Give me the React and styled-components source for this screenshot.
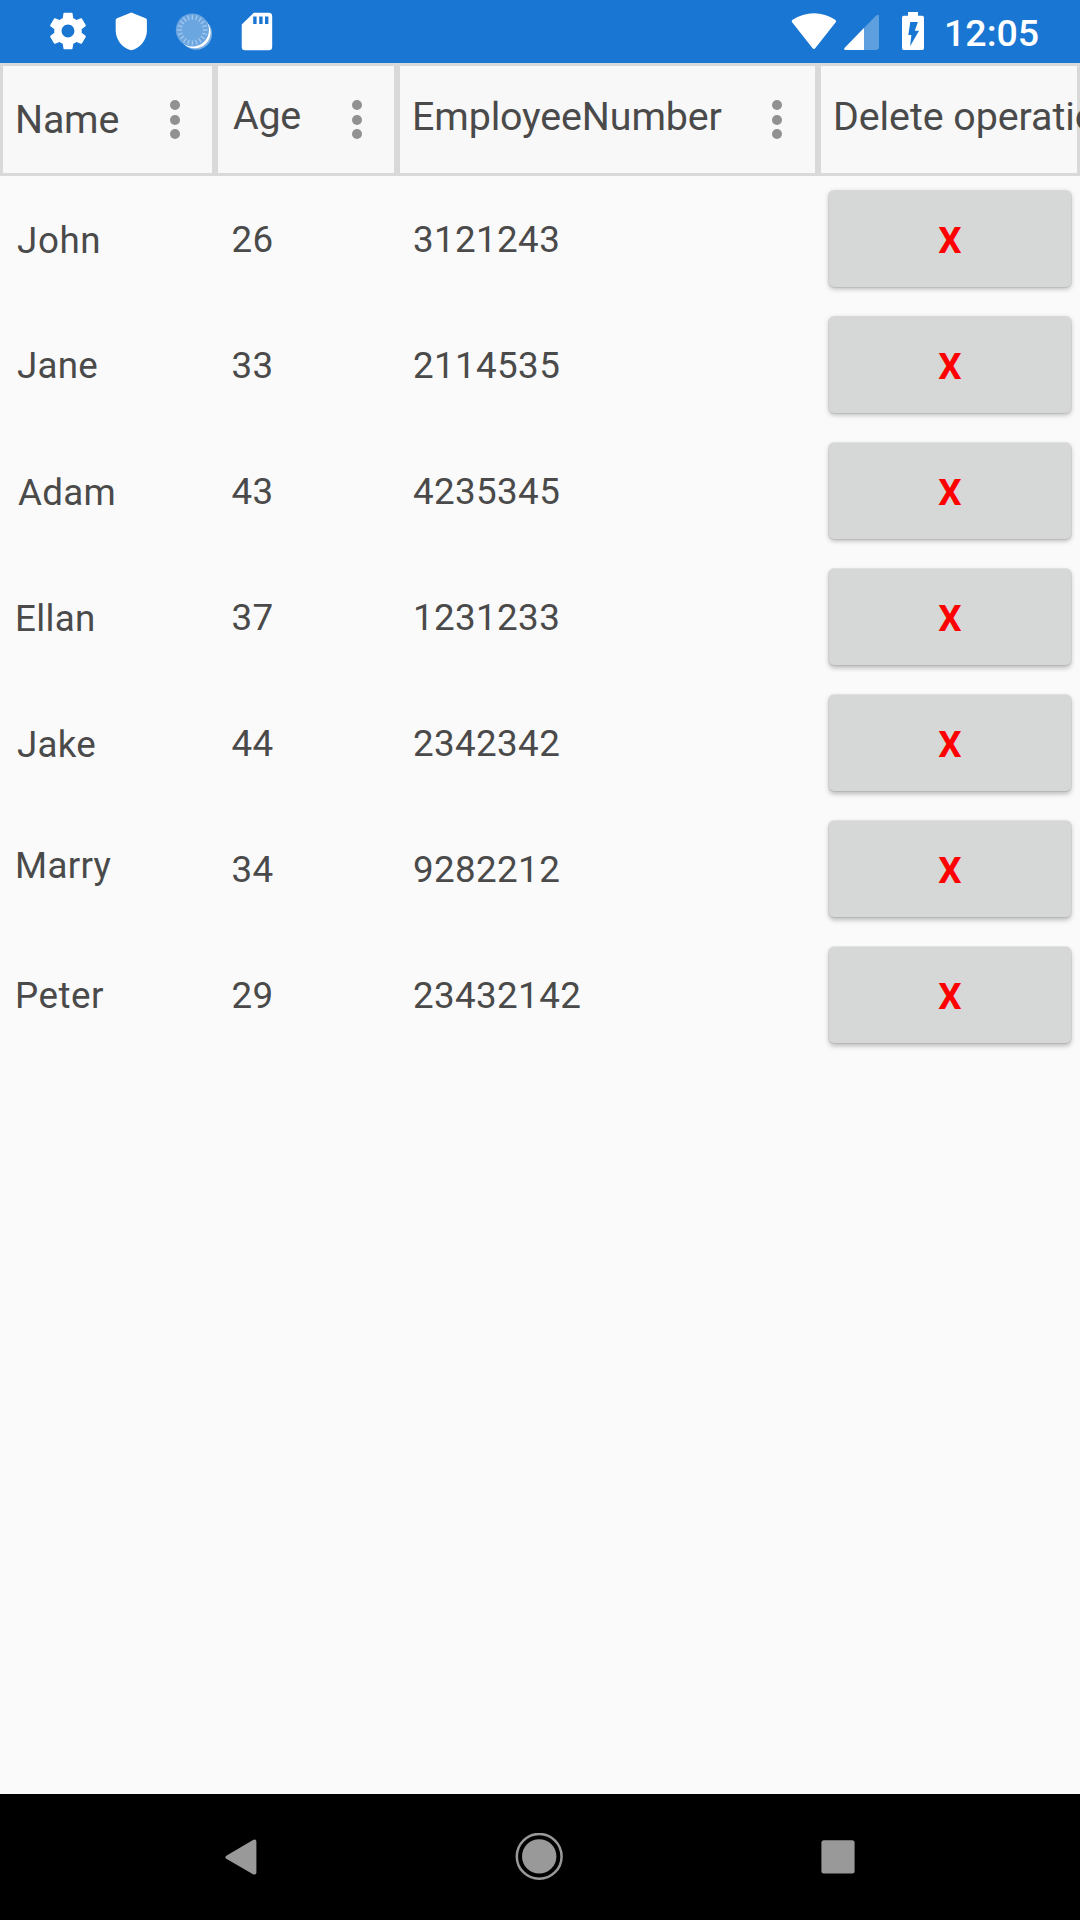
import React from "react";
import styled, { createGlobalStyle } from "styled-components";

const Global = createGlobalStyle`
  * { box-sizing: border-box; }
  html, body { margin: 0; padding: 0; }
  body { background: #fafafa; font-family: Roboto, "Noto Sans", sans-serif; color: #4a4a4a; overflow: hidden; }
`;

const Screen = styled.div`
  width: 1080px;
  height: 1920px;
  display: flex;
  flex-direction: column;
  background: #fafafa;
  overflow: hidden;
`;

const StatusBar = styled.header`
  flex: none;
  height: 63px;
  display: flex;
  justify-content: space-between;
  background: #1976d2;
  color: #fff;
`;

const StatusGroup = styled.div`
  display: flex;
  align-items: flex-start;
  padding: ${(p) => p.$pad};
`;

const Glyph = styled.svg`
  display: block;
  flex: none;
  margin-right: ${(p) => p.$gap || 0}px;
`;

const Clock = styled.time`
  width: 95px;
  font-size: 37.5px;
  font-weight: 500;
  line-height: 44px;
  padding-top: 2px;
  white-space: nowrap;
`;

const Grid = styled.main`
  flex: 1;
  min-height: 0;
  display: flex;
  flex-direction: column;
`;

const Row = styled.div`
  flex: none;
  display: grid;
  grid-template-columns: 215px 182px 421px 262px;
  height: ${(p) => (p.$head ? 113 : 126)}px;
`;

const HeaderCell = styled.div`
  display: flex;
  align-items: flex-start;
  justify-content: space-between;
  border: 3px solid #d9d9d9;
  background: #f8f8f8;
  padding-left: ${(p) => p.$left}px;
  padding-right: ${(p) => p.$right || 32}px;
  min-width: 0;
`;

const HeaderText = styled.span`
  font-size: 39.375px;
  line-height: 46px;
  padding-top: ${(p) => p.$top}px;
  white-space: nowrap;
  letter-spacing: ${(p) => p.$track || 0}px;
`;

const Menu = styled.span`
  display: flex;
  flex-direction: column;
  gap: 4.4px;
  padding-top: 34.4px;
`;

const Dot = styled.i`
  width: 10px;
  height: 10px;
  border-radius: 50%;
  background: #919191;
`;

const Cell = styled.div`
  font-size: 36.75px;
  line-height: 43px;
  padding-top: ${(p) => p.$top}px;
  padding-left: ${(p) => p.$left}px;
  letter-spacing: ${(p) => p.$track || 0}px;
`;

const ActionCell = styled.div`
  padding: 15px 9px 15px 11px;
  display: flex;
`;

const DeleteButton = styled.button`
  flex: 1;
  border: 0;
  border-radius: 5px;
  background: #d6d7d7;
  color: #ff0000;
  font: 700 36.75px/43px Roboto, "Noto Sans", sans-serif;
  padding: 2px 0 0;
  box-shadow: 0 0 0 1px rgba(0, 0, 0, 0.07), 0 ${(p) => p.$lift}px 5px rgba(0, 0, 0, 0.26);
`;

const NavBar = styled.nav`
  flex: none;
  height: 126px;
  background: #000;
  display: flex;
  align-items: center;
  padding-left: 225px;
`;

const people = [
  { name: "John", age: 26, number: "3121243", top: 43, left: 17, track: 0.6 },
  { name: "Jane", age: 33, number: "2114535", top: 42, left: 17, track: 0.25 },
  { name: "Adam", age: 43, number: "4235345", top: 43, left: 18, track: 0.3 },
  { name: "Ellan", age: 37, number: "1231233", top: 43, left: 15, track: 0.3 },
  { name: "Jake", age: 44, number: "2342342", top: 43, left: 17, track: 0.2 },
  { name: "Marry", age: 34, number: "9282212", top: 38, left: 15, track: 0.3 },
  { name: "Peter", age: 29, number: "23432142", top: 42, left: 15, track: 0.5 },
];

const GearIcon = () => (
  <Glyph width="44" height="44" viewBox="0 0 24 24" $gap={20}>
    <path fill="#fff" d="M19.43 12.98c.04-.32.07-.64.07-.98s-.03-.66-.07-.98l2.11-1.65c.19-.15.24-.42.12-.64l-2-3.46c-.12-.22-.39-.3-.61-.22l-2.49 1c-.52-.4-1.08-.73-1.69-.98l-.38-2.65C14.46 2.18 14.25 2 14 2h-4c-.25 0-.46.18-.49.42l-.38 2.65c-.61.25-1.17.59-1.69.98l-2.49-1c-.23-.09-.49 0-.61.22l-2 3.46c-.13.22-.07.49.12.64l2.11 1.65c-.04.32-.07.65-.07.98s.03.66.07.98l-2.11 1.65c-.19.15-.24.42-.12.64l2 3.46c.12.22.39.3.61.22l2.49-1c.52.4 1.08.73 1.69.98l.38 2.65c.03.24.24.42.49.42h4c.25 0 .46-.18.49-.42l.38-2.65c.61-.25 1.17-.59 1.69-.98l2.49 1c.23.09.49 0 .61-.22l2-3.46c.12-.22.07-.49-.12-.64l-2.11-1.65zM12 15.5c-1.93 0-3.5-1.57-3.5-3.5s1.57-3.5 3.5-3.5 3.5 1.57 3.5 3.5-1.57 3.5-3.5 3.5z" />
  </Glyph>
);

const ShieldIcon = () => (
  <Glyph width="42" height="44" viewBox="0 0 42 44" $gap={20}>
    <path fill="#fff" d="M21.3 3.6 7 9.2Q5.7 9.8 5.7 11V21.5C5.7 30.5 12 39 21.3 41.3 30.6 39 36.9 30.5 36.9 21.5V11Q36.9 9.8 35.6 9.2Z" />
  </Glyph>
);

const SpinnerIcon = () => (
  <Glyph width="44" height="44" viewBox="0 0 44 44" $gap={20}>
    <circle cx="24" cy="24.8" r="16" fill="#fff" opacity="0.45" />
    <circle cx="22.6" cy="23.2" r="16" fill="#fff" />
    <circle cx="20.4" cy="21" r="16.6" fill="#6ba6e1" />
    {Array.from({ length: 20 }, (_, i) => (
      <line key={i} x1="20.4" y1="5.8" x2="20.4" y2="10.6" stroke="#a3c8ed" strokeWidth="1.3" transform={`rotate(${i * 18} 20.4 21)`} />
    ))}
  </Glyph>
);

const SdCardIcon = () => (
  <Glyph width="42" height="44" viewBox="0 0 42 44">
    <path fill="#fff" fillRule="evenodd" d="M17.8 3.7H32.7Q36.2 3.7 36.2 7.2V37.8Q36.2 41.3 32.7 41.3H9Q5.7 41.3 5.7 37.8V15.6ZM17.2 7.5V15h3.4V7.5ZM23.2 7.5V15h3.4V7.5ZM29 7.5V15h3.4V7.5Z" />
  </Glyph>
);

const WifiIcon = () => (
  <Glyph width="46" height="44" viewBox="0 -1.2 46 44" $gap={7}>
    <path fill="#fff" d="M1.3 12.2C.4 11.2.6 10.4 1.6 9.5 14.3.8 31.7.8 44.2 9.5 45.2 10.4 45.4 11.2 44.5 12.2L24.4 37.9Q22.9 39.7 21.4 37.9Z" />
  </Glyph>
);

const SignalIcon = () => (
  <Glyph width="36" height="44" viewBox="0 0 36 44" $gap={22}>
    <path fill="#fff" opacity="0.3" d="M.8 38.8 31.6 7Q35 4.4 35 7.6V38.6Q35 41 32.6 41H2Q-.8 40.8.8 38.8Z" />
    <path fill="#fff" d="M20 19V41H2Q-.8 40.8.8 38.8Z" />
  </Glyph>
);

const BatteryIcon = () => (
  <Glyph width="22" height="44" viewBox="0 0 22 44" $gap={20}>
    <path fill="#fff" fillRule="evenodd" d="M6 3H16V6.8H20.2Q22 6.8 22 8.8V39Q22 41 20.2 41H1.8Q0 41 0 39V8.8Q0 6.8 1.8 6.8H6ZM8.3 13 6.3 26H9.4L8.1 37.2 17 21.8H12.8L15.9 13Z" />
  </Glyph>
);

const ColumnMenu = () => (
  <Menu>
    <Dot />
    <Dot />
    <Dot />
  </Menu>
);

export default function App() {
  return (
    <Screen>
      <Global />
      <StatusBar>
        <StatusGroup $pad="9px 0 0 46px">
          <GearIcon />
          <ShieldIcon />
          <SpinnerIcon />
          <SdCardIcon />
        </StatusGroup>
        <StatusGroup $pad="9px 41px 0 0">
          <WifiIcon />
          <SignalIcon />
          <BatteryIcon />
          <Clock>12:05</Clock>
        </StatusGroup>
      </StatusBar>
      <Grid>
        <Row $head>
          <HeaderCell $left={12}>
            <HeaderText $top={31} $track={-0.2}>Name</HeaderText>
            <ColumnMenu />
          </HeaderCell>
          <HeaderCell $left={15}>
            <HeaderText $top={27} $track={-0.3}>Age</HeaderText>
            <ColumnMenu />
          </HeaderCell>
          <HeaderCell $left={12} $right={33}>
            <HeaderText $top={28} $track={-0.12}>EmployeeNumber</HeaderText>
            <ColumnMenu />
          </HeaderCell>
          <HeaderCell $left={12}>
            <HeaderText $top={28} $track={-0.05}>Delete operation</HeaderText>
          </HeaderCell>
        </Row>
        {people.map((p, i) => (
          <Row key={p.name}>
            <Cell $top={p.top} $left={p.left} $track={p.track}>{p.name}</Cell>
            <Cell $top={42} $left={16.5} $track={0.37}>{p.age}</Cell>
            <Cell $top={42} $left={16} $track={0.37}>{p.number}</Cell>
            <ActionCell>
              <DeleteButton $lift={1.5 + i * 0.25}>X</DeleteButton>
            </ActionCell>
          </Row>
        ))}
      </Grid>
      <NavBar>
        <Glyph width="32" height="48" viewBox="0 0 32 48" $gap={258}>
          <path fill="#999" d="M1.3 25.8Q-.6 24.2 1.3 22.8L28 7Q31.4 5.4 31.4 9V39.2Q31.4 42.6 28 41.2Z" />
        </Glyph>
        <Glyph width="48" height="48" viewBox="0 0 48 48" $gap={257}>
          <circle cx="24.2" cy="23.4" r="22.4" fill="none" stroke="#999" strokeWidth="2.5" />
          <circle cx="24.2" cy="23.4" r="17.2" fill="#999" />
        </Glyph>
        <Glyph width="35" height="48" viewBox="0 0 35 48">
          <rect x="1.4" y="7.3" width="33.2" height="33.2" rx="2.5" fill="#999" />
        </Glyph>
      </NavBar>
    </Screen>
  );
}
